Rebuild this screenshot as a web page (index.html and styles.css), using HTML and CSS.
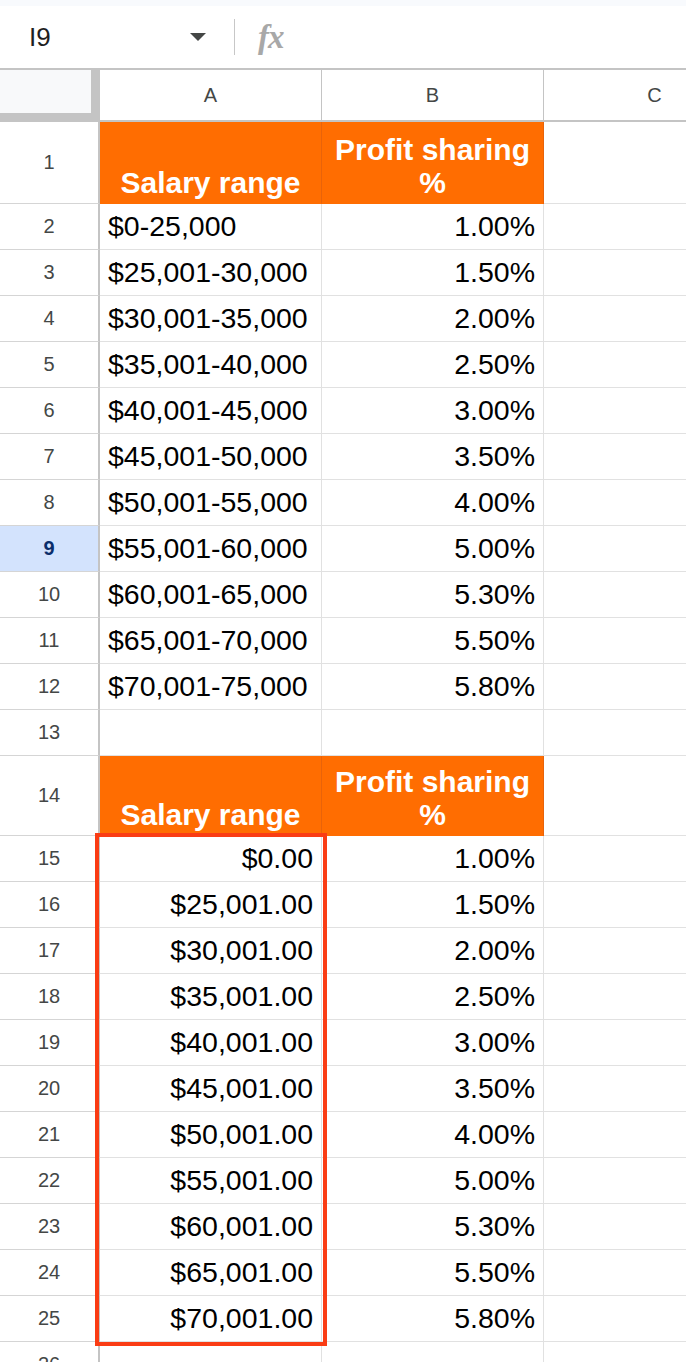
FILE: index.html
```html
<!DOCTYPE html>
<html lang="en">
<head>
    <meta charset="UTF-8">
    <meta name="viewport" content="width=device-width, initial-scale=1.0">
    <title>Profit sharing - Sheet</title>
    <link rel="stylesheet" href="styles.css">
</head>
<body>
    <div class="top-strip"></div>
    <div class="formula-bar">
        <div class="name-box">
            <span class="cell-ref">I9</span>
            <span class="caret"></span>
        </div>
        <div class="bar-divider"></div>
        <span class="fx">fx</span>
    </div>

    <div class="sheet">
        <div class="grid">
            <div class="corner"></div>
            <div class="col-head">A</div>
            <div class="col-head">B</div>
            <div class="col-head">C</div>

            <div class="row-head">1</div>
            <div class="cell head-cell">Salary range</div>
            <div class="cell head-cell">Profit sharing %</div>
            <div class="cell"></div>

            <div class="row-head">2</div><div class="cell">$0-25,000</div><div class="cell num">1.00%</div><div class="cell"></div>
            <div class="row-head">3</div><div class="cell">$25,001-30,000</div><div class="cell num">1.50%</div><div class="cell"></div>
            <div class="row-head">4</div><div class="cell">$30,001-35,000</div><div class="cell num">2.00%</div><div class="cell"></div>
            <div class="row-head">5</div><div class="cell">$35,001-40,000</div><div class="cell num">2.50%</div><div class="cell"></div>
            <div class="row-head">6</div><div class="cell">$40,001-45,000</div><div class="cell num">3.00%</div><div class="cell"></div>
            <div class="row-head">7</div><div class="cell">$45,001-50,000</div><div class="cell num">3.50%</div><div class="cell"></div>
            <div class="row-head">8</div><div class="cell">$50,001-55,000</div><div class="cell num">4.00%</div><div class="cell"></div>
            <div class="row-head active">9</div><div class="cell">$55,001-60,000</div><div class="cell num">5.00%</div><div class="cell"></div>
            <div class="row-head">10</div><div class="cell">$60,001-65,000</div><div class="cell num">5.30%</div><div class="cell"></div>
            <div class="row-head">11</div><div class="cell">$65,001-70,000</div><div class="cell num">5.50%</div><div class="cell"></div>
            <div class="row-head">12</div><div class="cell">$70,001-75,000</div><div class="cell num">5.80%</div><div class="cell"></div>
            <div class="row-head">13</div><div class="cell"></div><div class="cell"></div><div class="cell"></div>

            <div class="row-head">14</div>
            <div class="cell head-cell">Salary range</div>
            <div class="cell head-cell">Profit sharing %</div>
            <div class="cell"></div>

            <div class="row-head">15</div><div class="cell num">$0.00</div><div class="cell num">1.00%</div><div class="cell"></div>
            <div class="row-head">16</div><div class="cell num">$25,001.00</div><div class="cell num">1.50%</div><div class="cell"></div>
            <div class="row-head">17</div><div class="cell num">$30,001.00</div><div class="cell num">2.00%</div><div class="cell"></div>
            <div class="row-head">18</div><div class="cell num">$35,001.00</div><div class="cell num">2.50%</div><div class="cell"></div>
            <div class="row-head">19</div><div class="cell num">$40,001.00</div><div class="cell num">3.00%</div><div class="cell"></div>
            <div class="row-head">20</div><div class="cell num">$45,001.00</div><div class="cell num">3.50%</div><div class="cell"></div>
            <div class="row-head">21</div><div class="cell num">$50,001.00</div><div class="cell num">4.00%</div><div class="cell"></div>
            <div class="row-head">22</div><div class="cell num">$55,001.00</div><div class="cell num">5.00%</div><div class="cell"></div>
            <div class="row-head">23</div><div class="cell num">$60,001.00</div><div class="cell num">5.30%</div><div class="cell"></div>
            <div class="row-head">24</div><div class="cell num">$65,001.00</div><div class="cell num">5.50%</div><div class="cell"></div>
            <div class="row-head">25</div><div class="cell num">$70,001.00</div><div class="cell num">5.80%</div><div class="cell"></div>
            <div class="row-head">26</div><div class="cell"></div><div class="cell"></div><div class="cell"></div>
        </div>

        <!-- highlight around A15:A25 -->
        <div class="highlight"></div>
    </div>
</body>
</html>
```

FILE: styles.css
```css
* {
    box-sizing: border-box;
}
html, body {
    overflow: hidden;
}
body {
    font-family: 'Liberation Sans', Arial, sans-serif;
    margin: 0;
    padding: 0;
    background-color: #fff;
    color: #000;
    width: 686px;
    height: 1362px;
}
.top-strip {
    height: 6px;
    background: #f8fafd;
}
.formula-bar {
    height: 62px;
    display: flex;
    align-items: center;
    background: #fff;
}
.name-box {
    width: 234px;
    padding-left: 29px;
    padding-right: 28px;
    display: flex;
    align-items: center;
    justify-content: space-between;
}
.cell-ref {
    font-size: 26px;
    color: #1f1f1f;
}
.caret {
    width: 0;
    height: 0;
    border-left: 8px solid transparent;
    border-right: 8px solid transparent;
    border-top: 8px solid #444746;
}
.bar-divider {
    width: 1px;
    height: 36px;
    background: #c7c7c7;
}
.fx {
    margin-left: 23px;
    font-family: 'Liberation Serif', serif;
    font-style: italic;
    font-weight: bold;
    font-size: 33px;
    color: #a8a8a8;
    letter-spacing: -1px;
}
.sheet {
    position: relative;
    width: 686px;
    overflow: hidden;
}
.grid {
    display: grid;
    grid-template-columns: 100px 222px 222px 222px;
    grid-template-rows: 54px 82px repeat(12, 46px) 80px repeat(12, 46px);
    width: 766px;
}
.corner {
    background: #f8f9fa;
    border-top: 2px solid #c4c4c4;
    border-right: 9px solid #c4c4c4;
    border-bottom: 9px solid #c4c4c4;
}
.col-head {
    display: flex;
    align-items: center;
    justify-content: center;
    font-size: 20px;
    color: #444746;
    border-top: 2px solid #c4c4c4;
    border-right: 1px solid #c4c4c4;
    border-bottom: 2px solid #c4c4c4;
}
.row-head {
    display: flex;
    align-items: center;
    justify-content: center;
    font-size: 20px;
    color: #444746;
    border-right: 2px solid #c4c4c4;
    border-bottom: 1px solid #d5d5d5;
}
.row-head.active {
    background: #d3e3fd;
    color: #0b2e6b;
    font-weight: bold;
}
.cell {
    display: flex;
    align-items: center;
    padding: 0 8px;
    font-size: 28.5px;
    white-space: nowrap;
    border-right: 1px solid #e1e1e1;
    border-bottom: 1px solid #e1e1e1;
}
.cell.num {
    justify-content: flex-end;
}
.head-cell {
    background: #ff6d01;
    color: #fff;
    font-weight: bold;
    font-size: 30px;
    line-height: 33px;
    white-space: normal;
    text-align: center;
    justify-content: center;
    align-items: flex-end;
    padding: 0 10px 4px;
    border-right: 1px solid #e8630a;
    border-bottom: 1px solid #ff6d01;
}
.highlight {
    position: absolute;
    left: 95px;
    top: 765px;
    width: 232px;
    height: 513px;
    border: 4px solid #fa3c14;
    pointer-events: none;
}
```
